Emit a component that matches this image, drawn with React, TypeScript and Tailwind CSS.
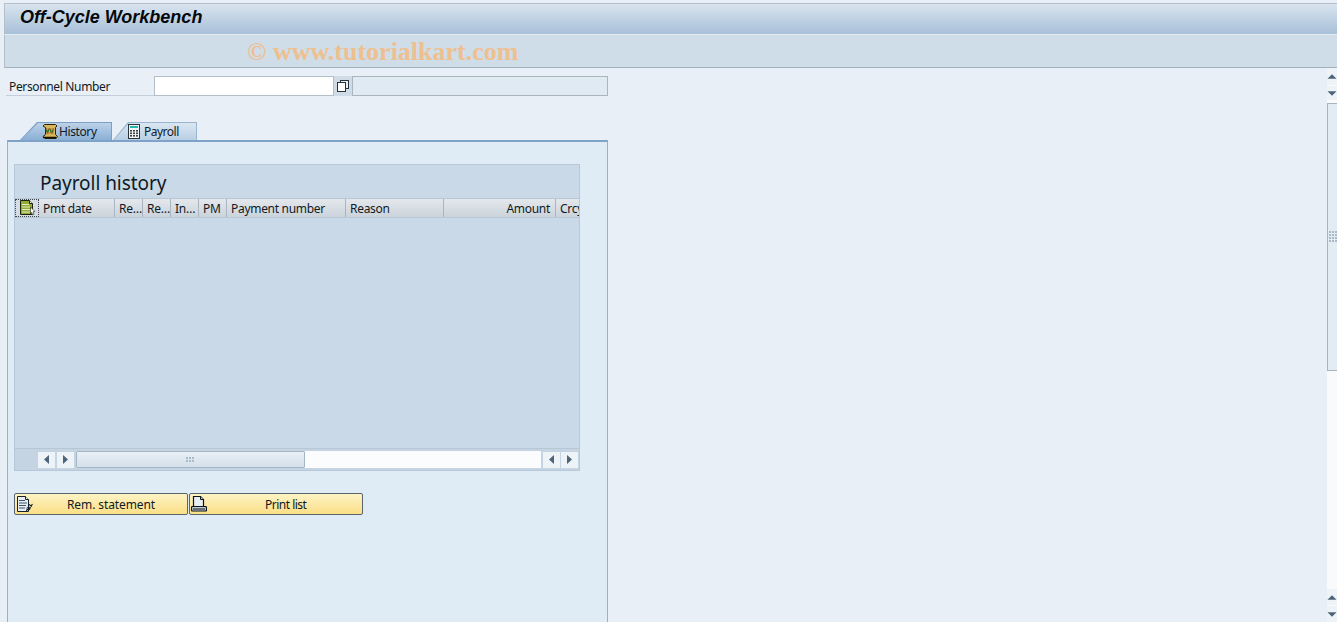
import React from "react";

const FONT = "[font-family:'Noto_Sans','Open_Sans',sans-serif]";

function Tri({ d }: { d: "l" | "r" | "u" | "d" }) {
  const pts = { l: "6,1 6,10 1,5.5", r: "1,1 1,10 6,5.5", u: "0.5,6 10.5,6 5.5,1", d: "0.5,1 10.5,1 5.5,6" }[d];
  const vertical = d === "u" || d === "d";
  return (
    <svg width={vertical ? 11 : 7} height={vertical ? 7 : 11} viewBox={vertical ? "0 0 11 7" : "0 0 7 11"}>
      <polygon points={pts} fill="#4d6378" />
    </svg>
  );
}

function Grip({ rows, cols }: { rows: number; cols: number }) {
  const dots = [];
  for (let r = 0; r < rows; r++) for (let c = 0; c < cols; c++) dots.push(<rect key={r + "-" + c} x={c * 3} y={r * 3} width={2} height={2} fill="#a9b9c7" />);
  return <svg width={cols * 3} height={rows * 3}>{dots}</svg>;
}

function HistoryIcon() {
  return (
    <svg width="16" height="15" viewBox="0 0 16 15" className="shrink-0">
      <path d="M2.5 .5h11l1.5 1.5-1.5 1.5v7l2 2-1.5 2h-11l-2-2 2.5-2v-7L1 2z" fill="#d8b65c" stroke="#2e2208" />
      <path d="M4 4.5l1.5 5M7 4.5l-1.5 5M8 4.5l1.5 5M11.5 4.5l-1.5 5" stroke="#2f6a28" strokeWidth="1.3" />
      <path d="M4 5h8M4 9h8" stroke="#d9742a" strokeWidth="1" />
      <path d="M1 13.5h13.5" stroke="#141005" strokeWidth="1.5" />
    </svg>
  );
}

function CalcIcon() {
  return (
    <svg width="12" height="15" viewBox="0 0 12 15" className="shrink-0">
      <rect x="0.5" y="0.5" width="11" height="14" fill="#f2f5f7" stroke="#2c3338" />
      <rect x="2" y="2" width="8" height="2" fill="#27b6b0" />
      {[6, 8.5, 11].map((y) => [2, 5, 8].map((x) => <rect key={x + "-" + y} x={x} y={y} width="2" height="1.6" fill="#3c4246" />))}
    </svg>
  );
}

function CopyIcon() {
  return (
    <svg width="12" height="12" viewBox="0 0 12 12">
      <rect x="3.5" y="0.5" width="8" height="8" fill="#e8eef3" stroke="#26333d" />
      <rect x="0.5" y="2.5" width="8" height="9" fill="#ffffff" stroke="#26333d" />
    </svg>
  );
}

function LayoutIcon() {
  return (
    <svg width="17" height="16" viewBox="0 0 17 16">
      <path d="M1.5 .5h9l3 3v11h-12z" fill="#93a93a" stroke="#1c240a" />
      <path d="M3 4.5h7M3 7h8M3 9.5h8M3 12h8" stroke="#e6efb8" strokeWidth="1" />
      <path d="M10.5 .5v3h3" fill="#f4f4ec" stroke="#1c240a" />
      <path d="M11.5 7l4.5 4.5-2 .3 1 2.4-1.4.6-1-2.4L11.5 14z" fill="#ffffff" stroke="#1c240a" strokeWidth="0.6" />
    </svg>
  );
}

function StatementIcon() {
  return (
    <svg width="18" height="17" viewBox="0 0 18 17" className="shrink-0">
      <path d="M1.5 .5h8l3 3v12h-11z" fill="#e8edf2" stroke="#14202a" />
      <path d="M3 4.5h6M3 7h8M3 9.5h7M3 12h6" stroke="#3f566b" />
      <path d="M9.5 .5v3h3" fill="#ffffff" stroke="#14202a" />
      <path d="M16.5 8l-3.5 5-2 .8-.6 1.2M13 8.5l3 2" fill="none" stroke="#14202a" strokeWidth="1.1" />
      <circle cx="12.5" cy="12.5" r="1.5" fill="none" stroke="#14202a" />
    </svg>
  );
}

function PrintIcon() {
  return (
    <svg width="16" height="16" viewBox="0 0 16 16" className="shrink-0">
      <path d="M2.5 .5h7l3 3v8h-10z" fill="#e9eef3" stroke="#0b1218" strokeWidth="1.2" />
      <path d="M9.5 .5v3h3" fill="#cfd8df" stroke="#0b1218" />
      <rect x="0.5" y="10.5" width="15" height="4.5" rx="1" fill="#c2ccd4" stroke="#0b1218" strokeWidth="1.2" />
      <path d="M2 13h12" stroke="#0b1218" />
    </svg>
  );
}

const cols: { label: string; w: string; right?: boolean }[] = [
  { label: "Pmt date", w: "w-[76px]" },
  { label: "Re…", w: "w-[28px]" },
  { label: "Re…", w: "w-[28px]" },
  { label: "In…", w: "w-[28px]" },
  { label: "PM", w: "w-[28px]" },
  { label: "Payment number", w: "w-[119px]" },
  { label: "Reason", w: "w-[98px]" },
  { label: "Amount", w: "w-[112px]", right: true },
  { label: "Crcy", w: "w-[24px]" },
];

function ArrowBox({ d }: { d: "l" | "r" }) {
  return (
    <div className="flex h-[16px] w-[17px] shrink-0 items-center justify-center bg-[#eef3f8]">
      <Tri d={d} />
    </div>
  );
}

function YellowButton({ icon, label, w, center }: { icon: React.ReactNode; label: string; w: string; center: string }) {
  return (
    <button className={`flex h-[22px] ${w} items-center rounded-[2px] border border-[#59646e] bg-gradient-to-b from-[#fdf3c4] to-[#fbdf85] pl-[1px] text-[12px] leading-none text-[#101a24]`}>
      {icon}
      <span className={`${center} whitespace-nowrap pt-[2px]`}>{label}</span>
    </button>
  );
}

export default function App() {
  return (
    <div className={`flex h-[622px] w-[1337px] flex-col overflow-hidden bg-[#e8eff7] text-[#101a24] ${FONT}`}>
      <header className="shrink-0 pl-[4px] pt-[3px]">
        <div className="flex h-[31px] items-center border-t border-l border-[#b3c0cc] bg-gradient-to-b from-[#d9e4ee] to-[#a8c0d9] pb-[4px] pl-[15px]">
          <h1 className="whitespace-nowrap text-[18px] font-bold italic leading-none text-[#05080c] [font-family:'Liberation_Sans',sans-serif]">Off-Cycle Workbench</h1>
        </div>
        <div className="flex h-[34px] items-center border-t border-b border-l border-t-[#e6edf3] border-b-[#9fb0be] border-l-[#b3c0cc] bg-[#cfdde8] pl-[242px]">
          <span className="whitespace-nowrap pt-[2px] text-[26px] font-bold leading-none text-[#eec08f] [font-family:'Liberation_Serif',serif]">© www.tutorialkart.com</span>
        </div>
      </header>

      <div className="flex min-h-0 flex-1">
        <main className="w-[608px] shrink-0 pt-[8px]">
          <div className="flex h-[21px] items-start pl-[6px]">
            <label className="h-[20px] w-[148px] border-b border-[#c3ced8] pl-[3px] pt-[2px] text-[12px] leading-[18px] tracking-[-0.35px]">Personnel Number</label>
            <div className="h-[20px] w-[180px] border border-[#b2bec8] bg-white" />
            <div className="flex h-[20px] w-[18px] items-center justify-center bg-[#cfdbe6]"><CopyIcon /></div>
            <div className="h-[20px] flex-1 border border-[#a9b6c0] bg-[#dfeaf3]" />
          </div>

          <div className="ml-[20px] mt-[25px] flex h-[18px] items-end">
            <div className="relative h-[18px] w-[92px] bg-[#7d9fc3] [clip-path:polygon(0_100%,17px_0,100%_0,100%_100%)]">
              <div className="flex h-[18px] items-center bg-gradient-to-b from-[#bfd4e9] to-[#8bafd6] pl-[22px] text-[12px] leading-none tracking-[-0.4px] [clip-path:polygon(1px_100%,18px_1px,calc(100%-1px)_1px,calc(100%-1px)_100%)]">
                <HistoryIcon />
                <span className="ml-[1px] pt-[2px]">History</span>
              </div>
            </div>
            <div className="relative ml-[1px] h-[18px] w-[84px] bg-[#9ab5cf] [clip-path:polygon(0_100%,15px_0,100%_0,100%_100%)]">
              <div className="flex h-[18px] items-center bg-gradient-to-b from-[#dce8f3] to-[#b9cfe4] pl-[15px] text-[12px] leading-none tracking-[-0.5px] [clip-path:polygon(1px_100%,16px_1px,calc(100%-1px)_1px,calc(100%-1px)_100%)]">
                <CalcIcon />
                <span className="ml-[4px] pt-[2px]">Payroll</span>
              </div>
            </div>
          </div>

          <section className="ml-[7px] h-[500px] border-x border-t-2 border-x-[#95b1cc] border-t-[#7fa3c8] bg-[#dfebf5] pl-[6px] pt-[22px]">
            <div className="w-[566px] border border-[#b8c8d8] bg-[#c9d9e8]">
              <div className="h-[33px] pl-[25px] pt-[5px] text-[19px] leading-[26px] tracking-[-0.05px]">Payroll history</div>
              <div className="flex h-[20px] items-stretch overflow-hidden border-y border-[#b9c7d5] bg-gradient-to-b from-[#e4e8ec] to-[#cbd3db] text-[12px] leading-[20px] tracking-[-0.3px]">
                <div className="flex w-[24px] shrink-0 items-center justify-center border border-dotted border-[#3a4650] bg-[#d6dde4]"><LayoutIcon /></div>
                {cols.map((c, i) => (
                  <div key={i} className={`${c.w} shrink-0 overflow-hidden whitespace-nowrap border-r border-[#a9b6c2] pl-[4px] ${c.right ? "pr-[5px] text-right" : "pr-[1px]"} ${i === cols.length - 1 ? "border-r-0" : ""}`}>{c.label}</div>
                ))}
              </div>
              <div className="h-[230px]" />
              <div className="flex h-[22px] items-center border-t border-[#b9c7d5] bg-[#c5d4e3] pl-[23px] pr-[1px]">
                <ArrowBox d="l" />
                <span className="w-[2px]" />
                <ArrowBox d="r" />
                <span className="w-[2px]" />
                <div className="flex h-[17px] flex-1 items-stretch bg-[#fbfcfd]">
                  <div className="flex w-[229px] items-center justify-center rounded-[1px] border border-[#a4b5c4] bg-gradient-to-b from-[#e9eff5] to-[#d4e0ea]"><Grip rows={2} cols={3} /></div>
                </div>
                <span className="w-[2px]" />
                <ArrowBox d="l" />
                <span className="w-[1px]" />
                <ArrowBox d="r" />
              </div>
            </div>

            <div className="mt-[22px] flex gap-[1px]">
              <YellowButton icon={<StatementIcon />} label="Rem. statement" w="w-[174px]" center="ml-[33px] tracking-[-0.1px]" />
              <YellowButton icon={<PrintIcon />} label="Print list" w="w-[174px]" center="ml-[58px] tracking-[-0.5px]" />
            </div>
          </section>
        </main>

        <div className="flex-1" />

        <aside className="flex w-[10px] shrink-0 flex-col bg-[#f8fafc]">
          <div className="flex h-[17px] items-center justify-center bg-[#eef3f8]"><Tri d="u" /></div>
          <div className="mt-[1px] flex h-[14px] items-center justify-center bg-[#eef3f8]"><Tri d="d" /></div>
          <div className="mt-[3px] flex h-[268px] items-center border border-r-0 border-[#a3b5c0] bg-[#e3ebf3] pl-[1px]"><Grip rows={4} cols={3} /></div>
          <div className="flex-1" />
          <div className="flex h-[16px] items-center justify-center bg-[#eef3f8]"><Tri d="u" /></div>
          <div className="mt-[1px] flex h-[16px] items-center justify-center bg-[#eef3f8]"><Tri d="d" /></div>
        </aside>
      </div>
    </div>
  );
}
